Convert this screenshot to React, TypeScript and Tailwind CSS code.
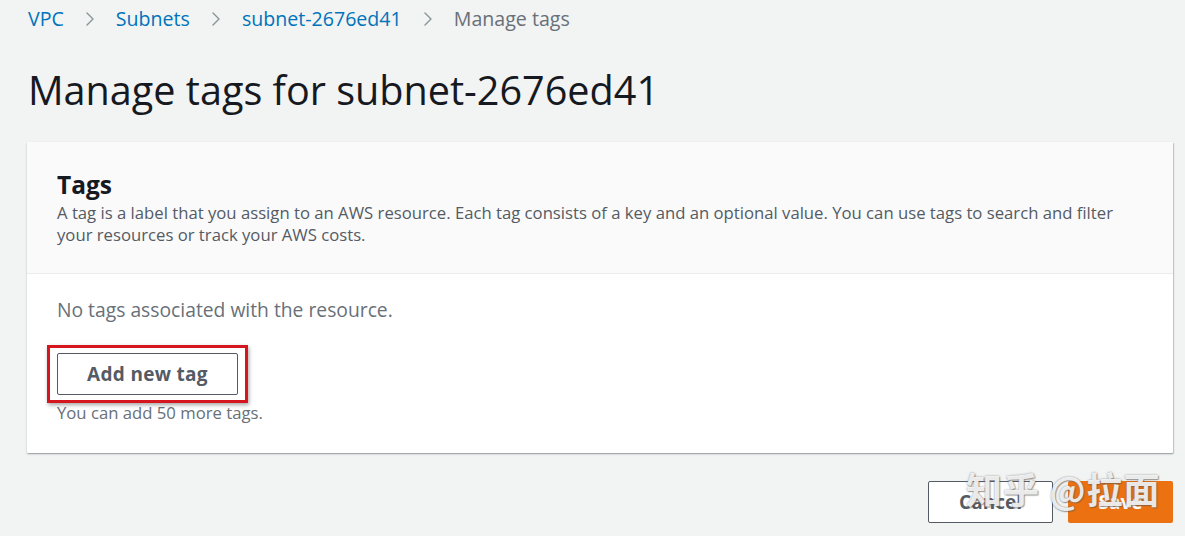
import { ChevronRight } from 'lucide-react';

const crumbs = ['VPC', 'Subnets', 'subnet-2676ed41'];

export default function App() {
  return (
    <div
      className="relative w-[1185px] h-[536px] overflow-hidden bg-[#f2f3f3] text-[#16191f]"
      style={{ fontFamily: '"Open Sans", "Noto Sans", sans-serif' }}
    >
      {/* breadcrumb */}
      <div className="flex items-center h-[38px] pl-[28px] text-[19.6px]">
        {crumbs.map((c) => (
          <div key={c} className="flex items-center">
            <span className="text-[#0073bb]">{c}</span>
            <ChevronRight className="mx-[14px] h-[24px] w-[24px] text-[#879596]" strokeWidth={1.4} />
          </div>
        ))}
        <span className="text-[#687078]">Manage tags</span>
      </div>

      <h1 className="pl-[28px] mt-[28px] text-[39.6px] leading-[48px] font-normal">
        Manage tags for subnet-2676ed41
      </h1>

      {/* card */}
      <div className="mx-[27px] mt-[28px] w-[1146px] bg-white shadow-[0_1px_2px_rgba(0,28,36,0.3),1px_1px_1px_rgba(0,28,36,0.15)] rounded-[1px]">
        <div className="bg-[#fafafa] border-b border-[#eaeded] px-[30px] pt-[28px] pb-[27px]">
          <h2 className="text-[24.5px] font-bold leading-[30px]">Tags</h2>
          <p className="mt-[2px] text-[16.7px] leading-[22px] text-[#545b64]">
            A tag is a label that you assign to an AWS resource. Each tag consists of a key and an optional value. You can use tags to search and filter your resources or track your AWS costs.
          </p>
        </div>
        <div className="px-[30px] pt-[23px] pb-[29px]">
          <p className="text-[19.3px] leading-[26px] text-[#687078]">No tags associated with the resource.</p>
          <div className="relative mt-[30px] inline-block">
            <button className="h-[42px] w-[181px] border border-[#545b64] rounded-[2px] bg-white text-[19px] font-bold text-[#545b64] tracking-[0.3px]">
              Add new tag
            </button>
            <div className="absolute left-[-10px] top-[-8px] w-[201px] h-[58px] border-[3px] border-[#d5161f] shadow-[1px_2px_4px_rgba(0,0,0,0.35)]" />
          </div>
          <p className="mt-[7px] text-[16.7px] leading-[22px] text-[#687078]">You can add 50 more tags.</p>
        </div>
      </div>

      {/* actions */}
      <div className="flex justify-end gap-[15px] pr-[12px] mt-[28px]">
        <button className="h-[42px] w-[125px] border border-[#545b64] rounded-[2px] bg-white text-[19px] font-bold text-[#545b64]">
          Cancel
        </button>
        <button className="h-[42px] w-[105px] rounded-[2px] bg-[#ec7211] text-[19px] font-bold text-white">
          Save
        </button>
      </div>

      {/* watermark */}
      <div
        className="absolute left-[966px] top-[461px] text-[36px] font-bold text-white/85 tracking-[1px]"
        style={{
          fontFamily: '"Noto Sans CJK SC", sans-serif',
          textShadow: '0 0 2px rgba(90,90,90,0.7), 1px 1px 1px rgba(90,90,90,0.5)',
        }}
      >
        知乎 @拉面
      </div>
    </div>
  );
}
